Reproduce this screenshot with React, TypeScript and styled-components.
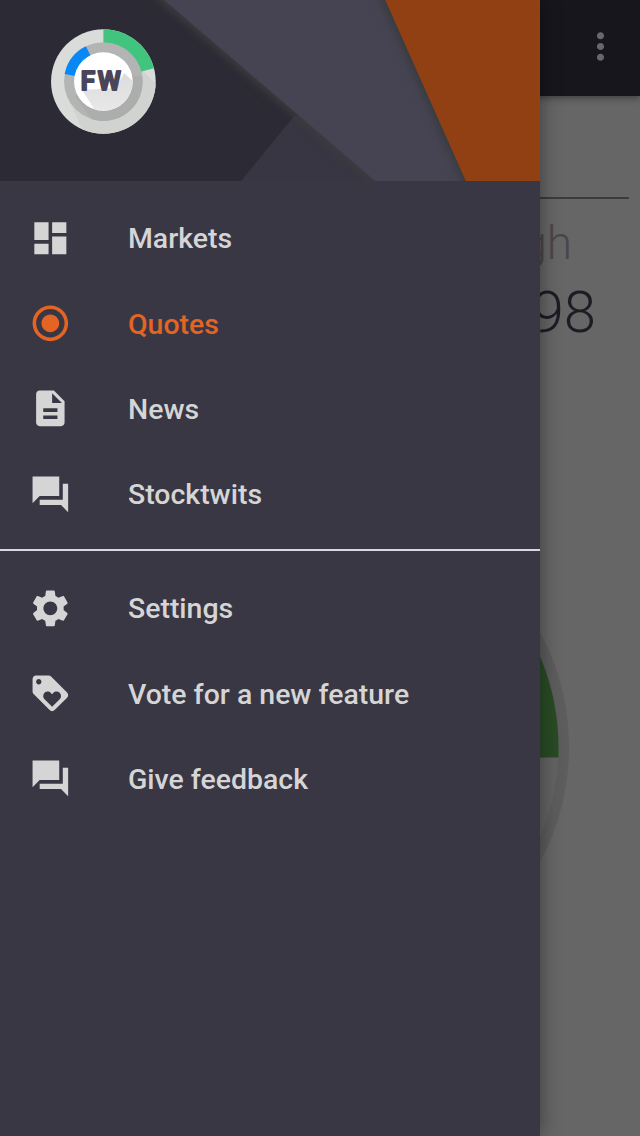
import React from 'react';
import styled, { createGlobalStyle } from 'styled-components';
import { MdDashboard, MdRadioButtonChecked, MdDescription, MdMoreVert } from 'react-icons/md';

const GlobalStyle = createGlobalStyle`
  * { box-sizing: border-box; }
  body { margin: 0; background: #666; }
`;

const Screen = styled.div`
  position: relative;
  width: 640px;
  height: 1136px;
  overflow: hidden;
  background: #666;
  font-family: Roboto, 'Liberation Sans', sans-serif;
`;

const Page = styled.main`
  display: flex;
  flex-direction: column;
  height: 100%;
`;

const Toolbar = styled.header`
  display: flex;
  flex: none;
  align-items: center;
  justify-content: flex-end;
  height: 96px;
  padding: 0 18px 4px 0;
  background: #17161c;
  color: #68686a;
  box-shadow: 0 2px 7px rgba(0, 0, 0, 0.4);
`;

const Quote = styled.section`
  display: flex;
  flex: none;
  flex-direction: column;
  align-items: flex-end;
  height: 303.5px;
  margin: 100.5px 11px 0 0;
  border-top: 2px solid #3c3c40;
  font-weight: 300;
`;

const QuoteLabel = styled.div`
  margin: 17px 57px 0 0;
  font-size: 46px;
  line-height: 54px;
  color: #48484c;
`;

const QuoteValue = styled.div`
  margin: 6px 33px 0 0;
  font-size: 58px;
  line-height: 72px;
  color: #1d1b24;
`;

const Dial = styled.svg`
  display: block;
  flex: none;
  align-self: flex-end;
  width: 560px;
  height: 500px;
`;

const Drawer = styled.aside`
  position: absolute;
  top: 0;
  left: 0;
  display: flex;
  flex-direction: column;
  width: 540.4px;
  height: 100%;
  background: #393744;
  box-shadow: 0 0 20px rgba(0, 0, 0, 0.42);
`;

const Banner = styled.svg`
  display: block;
  flex: none;
  width: 100%;
  height: 181px;
`;

const Menu = styled.nav<{ $divided?: boolean }>`
  display: flex;
  flex-direction: column;
  padding: ${(p) => (p.$divided ? '14.7px' : '14.5px')} 0 ${(p) => (p.$divided ? '0' : '12px')};
  border-top: ${(p) => (p.$divided ? '2px solid #d9d8e0' : 'none')};
`;

const Item = styled.a<{ $active?: boolean }>`
  display: flex;
  align-items: center;
  gap: 56.8px;
  height: 85.3px;
  padding-left: 28.5px;
  color: ${(p) => (p.$active ? '#e46424' : '#d5d5d6')};
  font-size: 28.44px;
  font-weight: 500;
  white-space: nowrap;

  svg { flex: none; width: 42.7px; height: 42.7px; }
`;

const Label = styled.span`
  padding-top: 2.6px;
  line-height: 34px;
`;

const Glyph = ({ d }: { d: string }) => (
  <svg viewBox="0 0 24 24" fill="currentColor"><path d={d} /></svg>
);

const GEAR =
  'M19.43 12.98c.04-.32.07-.64.07-.98s-.03-.66-.07-.98l2.11-1.65c.19-.15.24-.42.12-.64l-2-3.46c-.12-.22-.39-.3-.61-.22l-2.49 1c-.52-.4-1.08-.73-1.69-.98l-.38-2.65C14.46 2.18 14.25 2 14 2h-4c-.25 0-.46.18-.49.42l-.38 2.65c-.61.25-1.17.59-1.69.98l-2.49-1c-.23-.09-.49 0-.61.22l-2 3.46c-.13.22-.07.49.12.64l2.11 1.65c-.04.32-.07.65-.07.98s.03.66.07.98l-2.11 1.65c-.19.15-.24.42-.12.64l2 3.46c.12.22.39.3.61.22l2.49-1c.52.4 1.08.73 1.69.98l.38 2.65c.03.24.24.42.49.42h4c.25 0 .46-.18.49-.42l.38-2.65c.61-.25 1.17-.59 1.69-.98l2.49 1c.23.09.49 0 .61-.22l2-3.46c.12-.22.07-.49-.12-.64l-2.11-1.65zM12 15.9c-2.15 0-3.9-1.75-3.9-3.9s1.75-3.9 3.9-3.9 3.9 1.75 3.9 3.9-1.75 3.9-3.9 3.9z';
const TAG =
  'M21.41 11.58l-9-9C12.05 2.22 11.55 2 11 2H4c-1.1 0-2 .9-2 2v7c0 .55.22 1.05.59 1.42l9 9c.36.36.86.58 1.41.58s1.05-.22 1.41-.59l7-7c.37-.36.59-.86.59-1.41s-.23-1.06-.59-1.42zM5.5 7C4.67 7 4 6.33 4 5.5S4.67 4 5.5 4 7 4.67 7 5.5 6.33 7 5.5 7zm11.77 8.27L13 19.54l-4.27-4.27C8.28 14.81 8 14.19 8 13.5c0-1.38 1.12-2.5 2.5-2.5.69 0 1.32.28 1.77.74l.73.72.73-.73c.45-.45 1.08-.73 1.77-.73 1.38 0 2.5 1.12 2.5 2.5 0 .69-.28 1.32-.73 1.77z';
const CHAT =
  'M22 6h-3v9H6v2.8c0 .1.1.2.2.2H18l4 4zM17 12.8V2.2c0-.1-.1-.2-.2-.2H2.2c-.1 0-.2.1-.2.2V17l4-4h10.800c.1 0 .2-.1.2-.2z';

const markets = [
  { label: 'Markets', icon: <MdDashboard /> },
  { label: 'Quotes', icon: <MdRadioButtonChecked />, active: true },
  { label: 'News', icon: <MdDescription /> },
  { label: 'Stocktwits', icon: <Glyph d={CHAT} /> },
];

const extras = [
  { label: 'Settings', icon: <Glyph d={GEAR} /> },
  { label: 'Vote for a new feature', icon: <Glyph d={TAG} /> },
  { label: 'Give feedback', icon: <Glyph d={CHAT} /> },
];

const DrawerBanner = () => (
  <Banner viewBox="0 0 540 181" preserveAspectRatio="none">
    <defs>
      <filter id="soft" x="-20%" y="-20%" width="140%" height="140%" colorInterpolationFilters="sRGB">
        <feGaussianBlur stdDeviation="4" />
      </filter>
      <linearGradient id="face" x1="0" y1="0" x2="0" y2="1">
        <stop offset="0" stopColor="#dcdcdc" />
        <stop offset="1" stopColor="#e9e9e9" />
      </linearGradient>
      <clipPath id="core"><circle cx="103.3" cy="81.5" r="29.3" /></clipPath>
      <clipPath id="disc"><circle cx="103.3" cy="81.5" r="52.3" /></clipPath>
    </defs>
    <rect width="540" height="181" fill="#2c2b35" />
    <path d="M294 116L241 181H400V116Z" fill="#383642" />
    <path d="M124 -30L371 181L407 211H600V-30Z" fill="#3d3d3f" filter="url(#soft)" />
    <path d="M164 0L375 181H540V0Z" fill="#464453" />
    <path d="M367 -30L463 185L474 210H600V-30Z" fill="#383b3e" filter="url(#soft)" />
    <path d="M385 0L465.5 181H540V0Z" fill="#904013" />
    <circle cx="103.3" cy="81.5" r="52.3" fill="#dadcda" />
    <g clipPath="url(#disc)">
      <path d="M66 94L84 134H156V84L143 71Z" fill="#d1d3d1" />
    </g>
    <path d="M103.3 29.2A52.3 52.3 0 0 1 153.9 68.2L103.3 81.5Z" fill="#40c47e" />
    <circle cx="103.3" cy="81.5" r="39.3" fill="#b3b5b4" />
    <path d="M75 96L91 119A39 39 0 0 0 142 76L131 75Z" fill="#acaead" />
    <path d="M64.6 74A39.3 39.3 0 0 1 85.8 46.3L103.3 81.5Z" fill="#0788f5" />
    <circle cx="103.3" cy="81.5" r="29.3" fill="#fff" />
    <g clipPath="url(#core)">
      <path d="M82 90L98 115H136V84L124 73L116 88Z" fill="url(#face)" />
    </g>
    <text
      x="80.8 97.8" y="90.5" fontSize="26" fontWeight="500"
      fill="#4a4558" stroke="#4a4558" strokeWidth="2.2" strokeLinejoin="round"
    >
      FW
    </text>
  </Banner>
);

export default function App() {
  return (
    <Screen>
      <GlobalStyle />
      <Page>
        <Toolbar><MdMoreVert size={43} /></Toolbar>
        <Quote>
          <QuoteLabel>High</QuoteLabel>
          <QuoteValue>98</QuoteValue>
        </Quote>
        <Dial viewBox="80 500 560 500">
          <circle cx="326.5" cy="747" r="242.5" fill="#5d5d5d" />
          <circle cx="326.500" cy="747" r="232" fill="#636363" />
          <path d="M326.5 515A232 232 0 0 1 558.5 747V757.5H326.5Z" fill="#294b25" />
        </Dial>
      </Page>
      <Drawer>
        <DrawerBanner />
        <Menu>
          {markets.map((m) => (
            <Item key={m.label} $active={m.active}>{m.icon}<Label>{m.label}</Label></Item>
          ))}
        </Menu>
        <Menu $divided>
          {extras.map((m) => (
            <Item key={m.label}>{m.icon}<Label>{m.label}</Label></Item>
          ))}
        </Menu>
      </Drawer>
    </Screen>
  );
}
